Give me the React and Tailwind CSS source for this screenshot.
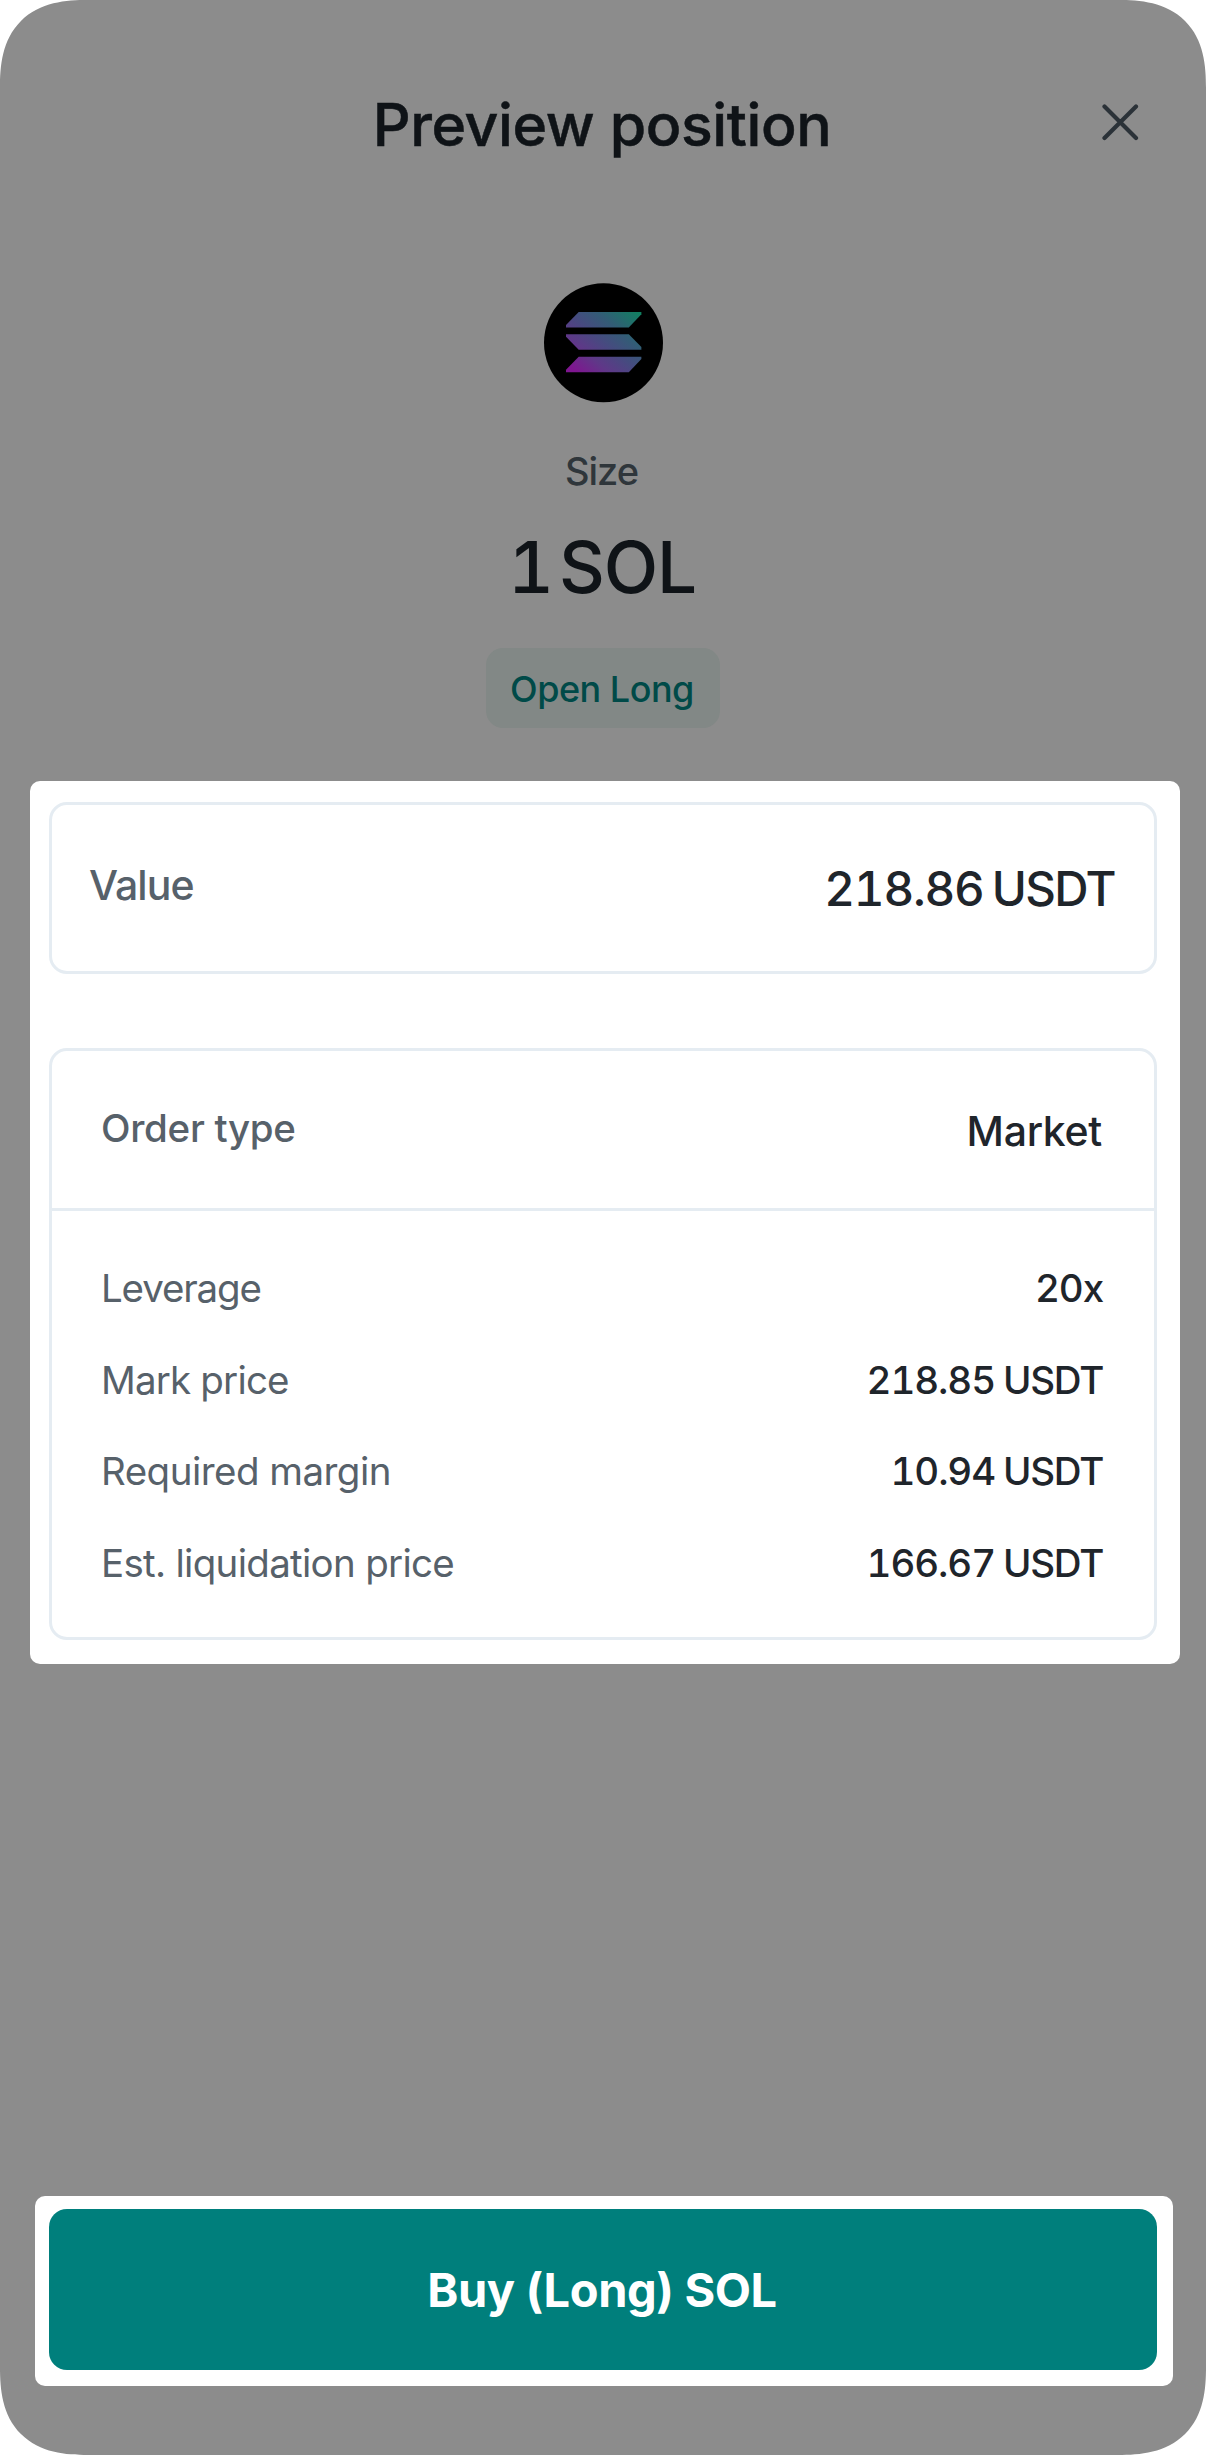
const details = [
    { label: 'Leverage', amount: '20x', labelClass: 'tracking-[-1.15px]' },
    { label: 'Mark price', amount: '218.85', unit: 'USDT', labelClass: 'tracking-[-0.82px]' },
    { label: 'Required margin', amount: '10.94', unit: 'USDT', labelClass: 'tracking-[-0.53px]' },
    { label: 'Est. liquidation price', amount: '166.67', unit: 'USDT', labelClass: 'tracking-[-0.7px]' },
];

export default function App() {
    return (
        <div className="w-[1206px] h-[2455px] bg-white font-[Inter,sans-serif]">
            <div className="flex flex-col w-full h-full bg-[#8c8c8c] text-[#0f1317] rounded-[74px] supports-[corner-shape:squircle]:rounded-[88px] supports-[corner-shape:squircle]:[corner-shape:superellipse(1.35)]">
                {/* Header */}
                <header className="mt-16 h-[120px] grid grid-cols-[1fr_auto_1fr] items-center">
                    <span />
                    <h1 className="pr-[2px] text-[59px] leading-none font-medium tracking-[-0.4px] [-webkit-text-stroke:0.5px_#0f1317]">Preview position</h1>
                    <button className="justify-self-end mr-[67px] pb-[3px]" aria-label="Close">
                        <CloseIcon />
                    </button>
                </header>

                {/* Position summary */}
                <section className="flex flex-col items-center">
                    <SolanaLogo />
                    <p className="mt-12 pr-[3px] text-[38px] leading-10 font-medium tracking-[-1px] text-[#2f363b]">Size</p>
                    <p className="mt-9 pr-[2px] flex items-center gap-[5px] text-[71px] leading-[81px] font-medium tabular-nums">
                        <span>1</span>
                        <span className="tracking-[-1.2px]">SOL</span>
                    </p>
                    <span className="mt-10 w-[234px] h-20 pt-[2px] pr-[2px] flex items-center justify-center rounded-[17px] bg-[#828886] text-[#004a48] text-[36px] leading-none font-medium tracking-[-0.5px]">
                        Open Long
                    </span>
                </section>

                {/* Order details */}
                <section className="mt-[53px] ml-[30px] w-[1150px] h-[883px] pt-[21px] pl-[19px] pr-[23px] rounded-[10px] bg-white text-[#1f252b]">
                    <div className="h-[172px] pl-[37px] pr-[39px] flex items-center justify-between border-3 border-[#e5ecf2] rounded-[18px]">
                        <span className="pb-[5px] text-[41px] leading-none font-medium tracking-[-0.9px] text-[#57616a]">Value</span>
                        <span className="pt-[2px] flex gap-[8px] text-[47.5px] leading-none font-medium tabular-nums">
                            <span className="tracking-[-1.2px]">218.86</span>
                            <span className="tracking-[-1.6px]">USDT</span>
                        </span>
                    </div>

                    <div className="mt-[74px] h-[592px] border-3 border-[#e5ecf2] rounded-[18px]">
                        <div className="h-40 pl-[49px] pr-[52px] flex items-center justify-between border-b-3 border-[#e5ecf2]">
                            <span className="pb-[2px] text-[38.5px] leading-none font-medium tracking-[-0.3px] text-[#57616a]">Order type</span>
                            <span className="pt-[3px] text-[41px] leading-none font-medium tracking-[-0.3px]">Market</span>
                        </div>
                        <div className="pt-8 pl-[49px] pr-[51px]">
                            {details.map((row) => (
                                <DetailRow key={row.label} {...row} />
                            ))}
                        </div>
                    </div>
                </section>

                {/* Action */}
                <div className="mt-auto mb-[69px] ml-[35px] w-[1138px] h-[190px] pt-[13px] pl-[14px] pr-4 rounded-[10px] bg-white">
                    <button className="w-full h-[161px] pr-[2px] rounded-[18px] bg-[#007f7c] text-white text-[47px] leading-none font-bold tracking-[-0.4px]">
                        Buy (Long) SOL
                    </button>
                </div>
            </div>
        </div>
    );
}

function DetailRow({ label, amount, unit, labelClass }) {
    return (
        <div className="h-[91.4px] flex items-center justify-between text-[38.5px] leading-none">
            <span className={`text-[#57616a] ${labelClass}`}>{label}</span>
            <span className="flex gap-2 font-medium tabular-nums">
                <span className="tracking-[-1.1px]">{amount}</span>
                {unit && <span className="tracking-[-1.3px]">{unit}</span>}
            </span>
        </div>
    );
}

function CloseIcon() {
    return (
        <svg width="37" height="37" viewBox="0 0 37 37" fill="none" stroke="#2b3238" strokeWidth="4.2" strokeLinecap="round">
            <path d="M2.5 2.5 34 34M34 2.5 2.5 34" />
        </svg>
    );
}

function SolanaLogo() {
    return (
        <svg className="mt-[99px]" width="120" height="120" viewBox="0 0 120 120">
            <defs>
                <linearGradient id="solana" x1="30" y1="96" x2="92" y2="24" gradientUnits="userSpaceOnUse">
                    <stop offset="0.08" stopColor="#7f1690" />
                    <stop offset="0.3" stopColor="#5f3888" />
                    <stop offset="0.5" stopColor="#474a80" />
                    <stop offset="0.7" stopColor="#335c76" />
                    <stop offset="1" stopColor="#0f8260" />
                </linearGradient>
            </defs>
            <circle cx="60.5" cy="59.7" r="59.5" fill="#000" />
            <g fill="url(#solana)">
                <path d="M35.7 29H98.4V31.2L85.8 44.5H23V42Z" />
                <path d="M23 51.3H85.8L98.4 64V66.7H35.7L23 53.8Z" />
                <path d="M35.7 73.8H98.4V76L85.8 89.2H23V86.8Z" />
            </g>
        </svg>
    );
}
